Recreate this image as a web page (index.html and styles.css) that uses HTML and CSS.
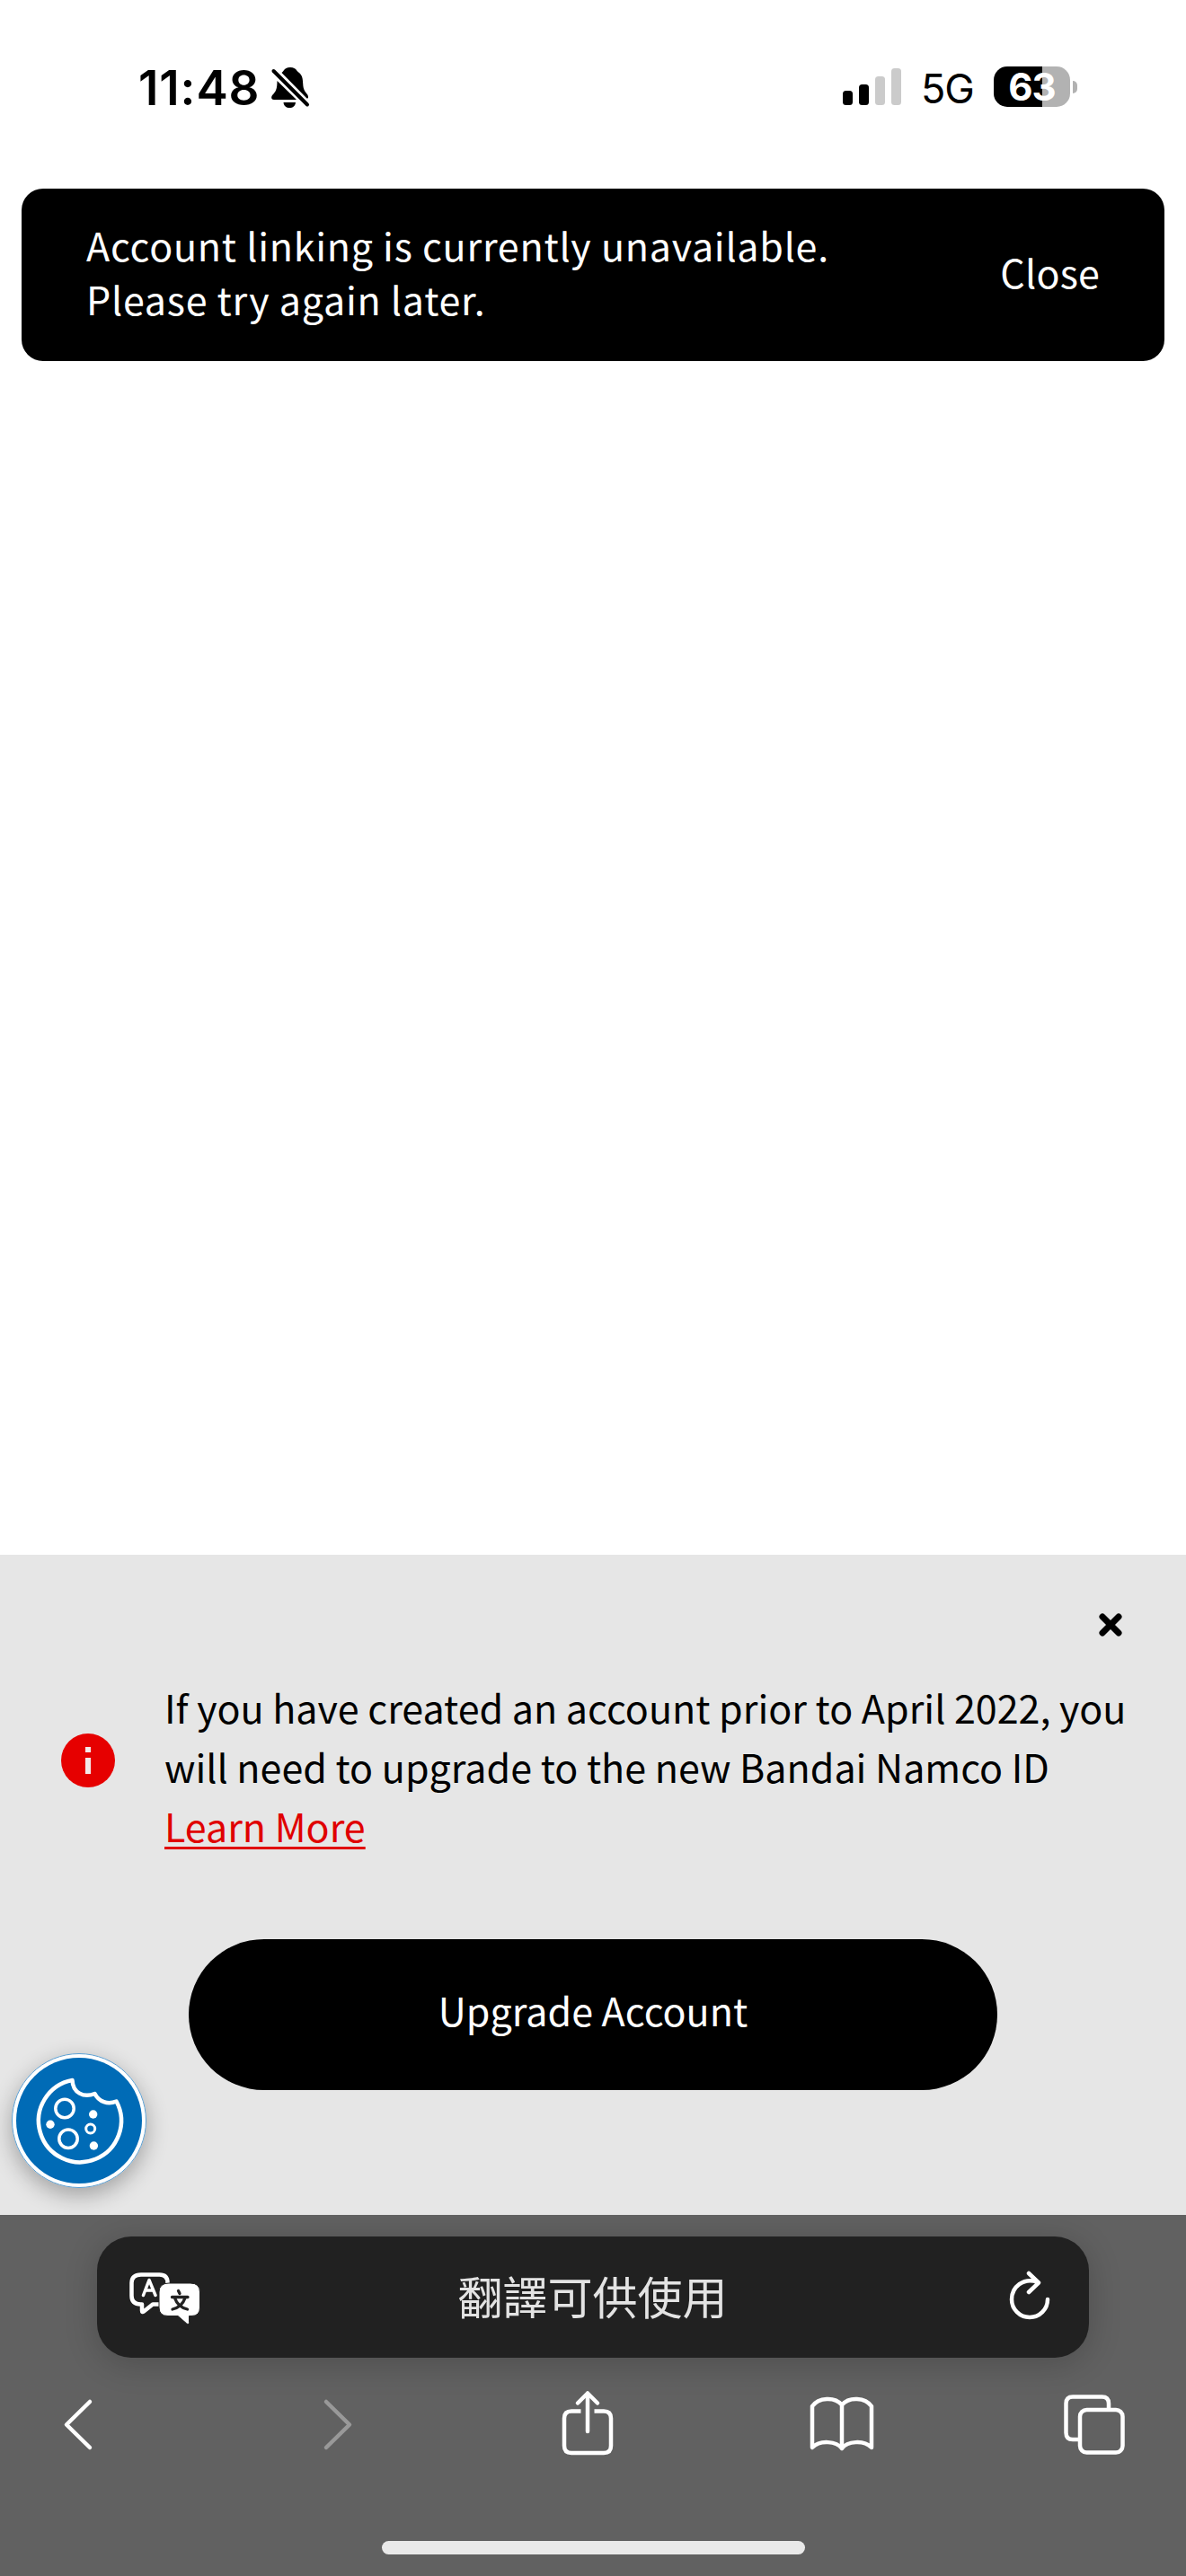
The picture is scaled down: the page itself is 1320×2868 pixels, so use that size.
FILE: index.html
```html
<!DOCTYPE html>
<html lang="en">
<head>
    <meta charset="UTF-8">
    <title>Bandai Namco ID</title>
    <meta name="viewport" content="width=device-width, initial-scale=1">
    <link rel="stylesheet" href="styles.css">
</head>
<body>
<div class="phone">
    <!-- STATUS BAR -->
    <header class="status">
        <div class="status-left">
            <span class="time">11:48</span>
            <svg class="bell" viewBox="0 0 44 48" width="44" height="48">
                <path d="M12.500 7C14.500 5.500 15 3.500 17 2.300C20 .6 24 .6 27 2.300C29 3.500 30 6 32 7C35.500 10 36 14 36.200 19C36.500 26 38.500 28 41 31C42 32.500 42.500 34.500 41.500 35.500L40.500 35.500Z"/>
                <path d="M7.500 16L29 37H4C.5 37 .6 33.500 2.500 31.500C6 28 7.500 25 7.500 16Z"/>
                <path d="M14.500 40H28C27.500 44 25 46 21.300 46C17.500 46 15 44 14.500 40Z"/>
                <path class="slash" d="M3.500 5L41 42.500"/>
            </svg>
        </div>
        <div class="status-right">
            <div class="signal">
                <i class="bar b1"></i><i class="bar b2"></i><i class="bar b3"></i><i class="bar b4"></i>
            </div>
            <span class="network">5G</span>
            <div class="battery"><span>63</span></div>
            <i class="nub"></i>
        </div>
    </header>

    <!-- PAGE -->
    <main class="content">
        <div class="toast">
            <p class="toast-text">Account linking is currently unavailable.<br>Please try again later.</p>
            <button type="button" class="toast-close">Close</button>
        </div>
    </main>

    <!-- UPGRADE NOTICE -->
    <section class="notice">
        <button type="button" class="notice-close" aria-label="Close">
            <svg viewBox="0 0 26 26" width="26" height="26"><path d="M4 4L22 22M22 4L4 22"/></svg>
        </button>
        <div class="notice-row">
            <svg class="info" viewBox="0 0 60 60" width="60" height="60">
                <circle cx="30" cy="30" r="30" fill="#e60000"/>
                <path d="M27 15h6v6h-6zM27 27h6v18h-6z" fill="#f3e9e9"/>
            </svg>
            <p class="notice-text">If you have created an account prior to April 2022, you<br>will need to upgrade to the new Bandai Namco ID<br><a href="#">Learn More</a></p>
        </div>
        <button type="button" class="upgrade">Upgrade Account</button>
        <button type="button" class="cookie" aria-label="Cookies">
            <svg viewBox="0 0 150 150" width="150" height="150">
                <circle cx="75" cy="75" r="74.500" fill="#fff" stroke="#5b9fd2" stroke-width="1"/>
                <circle cx="75" cy="75" r="70" fill="#006bb6"/>
                <g fill="none" stroke="#fff" stroke-width="4.500">
                    <path d="M67.500 30A46 46 0 1 0 116.500 53.500C107 57.500 97 54 92.500 45C80 50 68 44 67.500 30Z" stroke-linejoin="round"/>
                    <circle cx="59" cy="61.500" r="10.200" stroke-width="3.500"/>
                    <circle cx="63" cy="95.200" r="10.200" stroke-width="3.500"/>
                    <circle cx="87.700" cy="84" r="5" stroke-width="3"/>
                </g>
                <g fill="#fff">
                    <circle cx="43" cy="79.300" r="4.700"/>
                    <circle cx="90.700" cy="68" r="4.700"/>
                    <circle cx="91.400" cy="103" r="4.700"/>
                </g>
            </svg>
        </button>
    </section>

    <!-- BROWSER TOOLBAR -->
    <footer class="browser">
        <div class="address">
            <svg class="translate" viewBox="0 0 80 60" width="80" height="60">
                <path d="M13 2.500H33.500Q42.500 2.500 42.500 11.500V26Q42.500 35.500 33.500 35.500H26L16 43.500Q14 45 14 42.500V35.500H12.500Q2.500 35.500 2.500 26V12Q2.500 2.500 13 2.500Z" fill="none" stroke="#fff" stroke-width="4.500" stroke-linejoin="round"/>
                <path d="M15.500 25.500L22 8.500L29 25.500M18 20H26.800" fill="none" stroke="#fff" stroke-width="3.500" stroke-linecap="round" stroke-linejoin="round"/>
                <path d="M44 12H68Q78.500 12 78.500 22V39Q78.500 48.500 69 48.500H66.500V55.500Q66.500 59 63.500 56.700L54 48.500H43Q33 48.500 33 39V22Q33 12 44 12Z" fill="#fff" stroke="#222" stroke-width="1"/>
                <path d="M54.500 20.500L56 23.500M47.500 27.500H65M50.500 28.500Q54 38.500 64.500 41M62 28.500Q58.500 38.500 48 41" fill="none" stroke="#222" stroke-width="3.300" stroke-linecap="round"/>
            </svg>
            <span class="address-text" lang="zh-Hant">翻譯可供使用</span>
            <svg class="reload" viewBox="0 0 48 58" width="48" height="58">
                <path d="M32.500 14.500C17 9.500 4 20 4 34A20 20 0 0 0 44 34M23 5L34 15.500L23 26"/>
            </svg>
        </div>
        <nav class="tools">
            <svg viewBox="0 0 34 80" width="34" height="80"><path d="M30 15L4 40.500L30 66"/></svg>
            <svg class="forward" viewBox="0 0 34 80" width="34" height="80"><path d="M4 15L30 40.500L4 66"/></svg>
            <svg class="share" viewBox="0 0 60 80" width="60" height="80">
                <path d="M22.500 25.500H12Q4 25.500 4 33.500V64Q4 72 12 72H48Q56 72 56 64V33.500Q56 25.500 48 25.500H37.500" stroke-linecap="butt"/>
                <path d="M30 48V5.500M19 16.500L30 5.500L41 16.500"/>
            </svg>
            <svg class="book" viewBox="0 0 74 80" width="74" height="80">
                <path d="M37 67C31 59 13 57 4 66V20C11 10 29 9 37 18.500C45 9 63 10 70 20V66C61 57 43 59 37 67ZM37 18.500V67"/>
            </svg>
            <svg viewBox="0 0 70 80" width="70" height="80">
                <path d="M51 24V17Q51 9.500 43.500 9.500H11Q3.500 9.500 3.500 17V49.500Q3.500 57 11 57H19" stroke-linecap="butt"/>
                <rect x="19" y="24" width="47.500" height="47.500" rx="7.500"/>
            </svg>
        </nav>
        <div class="home"></div>
    </footer>
</div>
</body>
</html>
```

FILE: styles.css
```css
* { box-sizing: border-box; }
body { margin: 0; background: #fff; font-family: "Noto Sans CJK JP", "Noto Sans", sans-serif; font-size: 43px; color: #000; }
button { border: none; padding: 0; background: none; font: inherit; color: inherit; cursor: pointer; }
p { margin: 0; }
svg { display: block; flex: none; }
.phone { width: 1320px; height: 2868px; display: flex; flex-direction: column; overflow: hidden; }

/* status bar */
.status { height: 210px; padding: 68px 121px 0 154px; display: flex; justify-content: space-between; align-items: flex-start; font-family: Inter, "Liberation Sans", sans-serif; }
.status-left { display: flex; align-items: center; gap: 12px; height: 60px; }
.time { font-size: 53px; font-weight: 600; line-height: 60px; letter-spacing: 0.9px; }
.bell .slash { fill: none; stroke: #000; stroke-width: 4; stroke-linecap: round; }
.status-right { display: flex; align-items: center; height: 57px; }
.signal { display: flex; align-items: flex-end; gap: 7px; height: 41px; }
.bar { width: 11px; border-radius: 3.5px; background: #000; }
.b1 { height: 16px; }
.b2 { height: 23px; }
.b3 { height: 32px; background: #cbcbcb; }
.b4 { height: 41px; background: #cbcbcb; }
.network { width: 60px; margin: 4px 21px 0 22px; font-size: 45px; line-height: 54px; letter-spacing: -1px; }
.battery { width: 85px; height: 45px; border-radius: 15px; background: linear-gradient(to right, #000 54px, #b2b2b2 54px); color: #fff; font-size: 42px; font-weight: 700; line-height: 45px; text-align: center; letter-spacing: -1px; }
.nub { width: 5px; height: 14px; margin-left: 3px; border-radius: 0 7px 7px 0; background: #b2b2b2; }

/* message */
.content { flex: 1; padding: 0 24px; }
.toast { height: 192px; padding: 0 72px; border-radius: 24px; background: #000; color: #fff; display: flex; justify-content: space-between; align-items: center; letter-spacing: 0.75px; line-height: 60px; }
.toast-text, .toast-close { padding-bottom: 9px; }
.toast-close { letter-spacing: 0.2px; }

/* upgrade notice */
.notice { position: relative; height: 735px; background: #e6e6e6; display: flex; flex-direction: column; align-items: center; padding-top: 65px; }
.notice-close { align-self: flex-end; margin-right: 71px; height: 26px; }
.notice-close path { stroke: #000; stroke-width: 7; stroke-linecap: round; }
.notice-row { width: 100%; margin-top: 45px; padding-left: 68px; display: flex; align-items: flex-start; gap: 55px; }
.info { margin-top: 63px; }
.notice-text { line-height: 66px; white-space: nowrap; }
.notice-text a { color: #e00000; text-decoration: underline; text-decoration-thickness: 3px; text-underline-offset: 5px; }
.upgrade { width: 900px; height: 168px; margin-top: 94px; padding-bottom: 13px; border-radius: 84px; background: #000; color: #fff; }
.cookie { position: absolute; left: 13px; top: 555px; width: 150px; height: 150px; border-radius: 50%; box-shadow: 0 8px 24px rgba(0, 0, 0, .3); }

/* browser toolbar */
.browser { position: relative; height: 402px; padding: 24px 0 24px; background: #616161; display: flex; flex-direction: column; align-items: center; }
.address { width: 1104px; height: 135px; padding: 0 42px 0 36px; border-radius: 38px; background: #212121; box-shadow: 0 6px 36px rgba(0, 0, 0, .2); display: flex; justify-content: space-between; align-items: center; }
.translate { margin-top: 4px; }
.address-text { font-family: "Noto Sans CJK TC", sans-serif; font-size: 50px; color: #e3e3e3; line-height: 60px; margin: -5px 27px 0 0; }
.reload { margin-top: -5px; }
.reload path, .tools svg { fill: none; stroke: #fff; stroke-width: 4.5; stroke-linecap: round; stroke-linejoin: round; }
.tools { width: 1320px; margin-top: 34px; padding-left: 70px; display: flex; gap: 209px; }
.tools .forward { margin-left: 46px; stroke: #999; }
.tools .share { margin-left: 22px; }
.tools .book { margin-left: 6.5px; }
.home { width: 471px; height: 15px; margin-top: auto; border-radius: 8px; background: #e9e9e9; }
```
